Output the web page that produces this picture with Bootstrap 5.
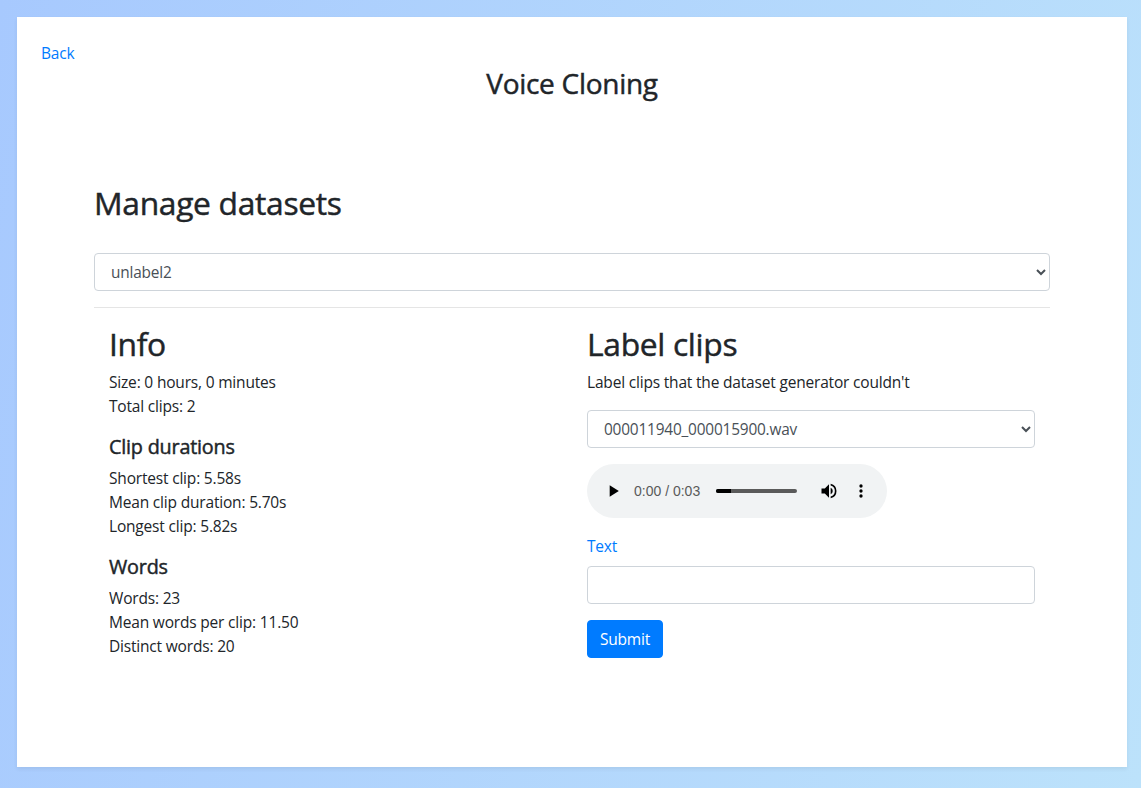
<!DOCTYPE html>
<html lang="en">
<head>
<meta charset="utf-8">
<meta name="viewport" content="width=device-width, initial-scale=1">
<title>Voice Cloning</title>
<link href="https://cdn.jsdelivr.net/npm/bootstrap@5.3.0/dist/css/bootstrap.min.css" rel="stylesheet">
<style>
  body {
    font-family: "Open Sans", "Noto Sans", sans-serif;
    font-size: 15.5px;
    line-height: 24px;
    letter-spacing: -.012em;
    color: #212529;
    min-height: 788px;
    background: linear-gradient(102deg, #a7c9fe 0%, #bce2fb 100%);
    overflow: hidden;
  }
  .sheet { width: 1110px; height: 750px; margin: 17px 0 0 17px; }
  .content { width: 956px; margin-top: 83px; }
  h1, h2, h3 { font-weight: 500; letter-spacing: -.01em; -webkit-text-stroke: .45px currentColor; }
  h1 { font-size: 28px; line-height: 34px; padding-top: 1px; }
  h2 { font-size: 31.8px; line-height: 40px; margin-bottom: 6px; }
  h3 { font-size: 19.8px; line-height: 26px; margin-bottom: 6px; }
  a, label { color: #007bff; }
  .form-control {
    height: 38px; border-color: #ced4da; border-radius: 4px; color: #495057;
    font-size: 15.4px; letter-spacing: inherit;
  }
  select.form-control { appearance: auto; background: #fff; padding: 7px 12px 6px; }
  .dataset { margin-top: 30px; }
  .pane { width: 50%; padding: 0 15px; }
  hr { border-top-color: #000; opacity: .1; }
  .btn-primary {
    --bs-btn-bg: #007bff; --bs-btn-border-color: #007bff;
    height: 38px; border-radius: 4px; font-size: 15.5px; letter-spacing: inherit; width: 76px; padding: 7px 0 5px;
  }
  .player { width: 300px; height: 54px; background: #f1f3f4; }
  .player .clock { font: 14px/20px "Liberation Sans", sans-serif; letter-spacing: 0; color: #5a5a5a; width: 82px; margin-left: 11px; }
  .track { width: 81px; height: 4px; background: #5a5a5a; margin-right: 22px; }
  .track-fill { height: 4px; width: 15px; background: #000; }
  .more-icon { margin-left: 12px; }
</style>
</head>
<body>
<main class="sheet bg-white shadow-sm p-4">
  <a href="#" class="text-decoration-none d-block">Back</a>
  <h1 class="text-center mb-0">Voice Cloning</h1>
  <div class="content mx-auto">
    <h2 class="mb-0">Manage datasets</h2>
    <select class="form-control dataset" aria-label="Dataset"><option>unlabel2</option></select>
    <hr class="my-3">
    <div class="d-flex">
      <section class="pane">
        <h2>Info</h2>
        <div>Size: 0 hours, 0 minutes</div>
        <div class="mb-3">Total clips: 2</div>
        <h3>Clip durations</h3>
        <div>Shortest clip: 5.58s</div>
        <div>Mean clip duration: 5.70s</div>
        <div class="mb-3">Longest clip: 5.82s</div>
        <h3>Words</h3>
        <div>Words: 23</div>
        <div>Mean words per clip: 11.50</div>
        <div>Distinct words: 20</div>
      </section>
      <section class="pane">
        <h2>Label clips</h2>
        <p class="mb-3">Label clips that the dataset generator couldn't</p>
        <select class="form-control mb-3" aria-label="Clip"><option>000011940_000015900.wav</option></select>
        <div class="player rounded-pill d-flex align-items-center mb-3">
          <svg class="ms-3" width="20" height="20" viewBox="0 0 24 24"><path d="M8 5v14l11-7z"/></svg>
          <span class="clock">0:00 / 0:03</span>
          <div class="track rounded-pill overflow-hidden"><div class="track-fill"></div></div>
          <svg width="20" height="20" viewBox="0 0 24 24"><path d="M3 9v6h4l5 5V4L7 9H3zm13.5 3A4.5 4.5 0 0 0 14 7.97v8.05A4.47 4.47 0 0 0 16.5 12zM14 3.23v2.06a7 7 0 0 1 0 13.42v2.06a9 9 0 0 0 0-17.54z"/></svg>
          <svg class="more-icon" width="20" height="20" viewBox="0 0 24 24"><path d="M12 8a2 2 0 1 0 0-4 2 2 0 0 0 0 4zm0 2a2 2 0 1 0 0 4 2 2 0 0 0 0-4zm0 6a2 2 0 1 0 0 4 2 2 0 0 0 0-4z"/></svg>
        </div>
        <label for="text" class="d-block mb-2">Text</label>
        <input id="text" class="form-control mb-3" type="text">
        <button class="btn btn-primary" type="button">Submit</button>
      </section>
    </div>
  </div>
</main>
<script src="https://cdn.jsdelivr.net/npm/bootstrap@5.3.0/dist/js/bootstrap.bundle.min.js"></script>
</body>
</html>
